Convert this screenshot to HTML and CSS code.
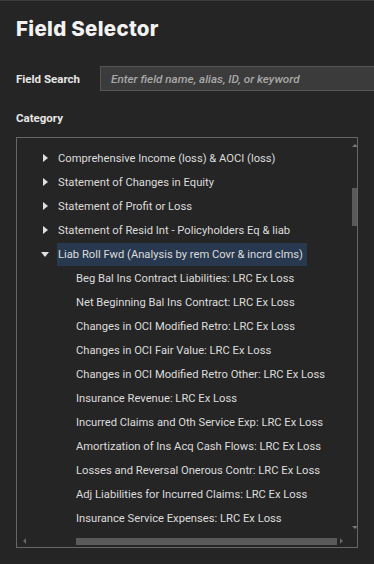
FILE: index.html
```html
<!DOCTYPE html>
<html lang="en">
<head>
    <meta charset="UTF-8">
    <meta name="viewport" content="width=device-width, initial-scale=1.0">
    <title>Field Selector</title>
    <link rel="stylesheet" href="styles.css">
</head>
<body>
<div class="panel">
    <h1 class="panel-title">Field Selector</h1>

    <!-- Buscador de campos -->
    <div class="search-row">
        <label class="field-label" for="fieldSearch">Field Search</label>
        <input type="text" id="fieldSearch" class="search-input" placeholder="Enter field name, alias, ID, or keyword">
    </div>

    <div class="field-label category-label">Category</div>

    <!-- Arbol de categorias -->
    <div class="tree">
        <div class="tree-viewport">
            <div class="tree-row"><span class="caret closed"></span><span class="node">Comprehensive Income (loss) &amp; AOCI (loss)</span></div>
            <div class="tree-row"><span class="caret closed"></span><span class="node">Statement of Changes in Equity</span></div>
            <div class="tree-row"><span class="caret closed"></span><span class="node">Statement of Profit or Loss</span></div>
            <div class="tree-row"><span class="caret closed"></span><span class="node">Statement of Resid Int - Policyholders Eq &amp; liab</span></div>
            <div class="tree-row"><span class="caret open"></span><span class="node selected">Liab Roll Fwd (Analysis by rem Covr &amp; incrd clms)</span></div>
            <div class="tree-row child"><span class="node">Beg Bal Ins Contract Liabilities: LRC Ex Loss</span></div>
            <div class="tree-row child"><span class="node">Net Beginning Bal Ins Contract: LRC Ex Loss</span></div>
            <div class="tree-row child"><span class="node">Changes in OCI Modified Retro: LRC Ex Loss</span></div>
            <div class="tree-row child"><span class="node">Changes in OCI Fair Value: LRC Ex Loss</span></div>
            <div class="tree-row child"><span class="node">Changes in OCI Modified Retro Other: LRC Ex Loss</span></div>
            <div class="tree-row child"><span class="node">Insurance Revenue: LRC Ex Loss</span></div>
            <div class="tree-row child"><span class="node">Incurred Claims and Oth Service Exp: LRC Ex Loss</span></div>
            <div class="tree-row child"><span class="node">Amortization of Ins Acq Cash Flows: LRC Ex Loss</span></div>
            <div class="tree-row child"><span class="node">Losses and Reversal Onerous Contr: LRC Ex Loss</span></div>
            <div class="tree-row child"><span class="node">Adj Liabilities for Incurred Claims: LRC Ex Loss</span></div>
            <div class="tree-row child"><span class="node">Insurance Service Expenses: LRC Ex Loss</span></div>
        </div>

        <!-- Barras de desplazamiento -->
        <div class="vscroll">
            <span class="arrow up"></span>
            <div class="vtrack"><div class="vthumb"></div></div>
            <span class="arrow down"></span>
        </div>
        <div class="hscroll">
            <span class="arrow left"></span>
            <div class="htrack"><div class="hthumb"></div></div>
            <span class="arrow right"></span>
        </div>
        <div class="corner"></div>
    </div>
</div>
</body>
</html>
```

FILE: styles.css
```css
html, body {
    margin: 0;
    padding: 0;
    background: #252525;
}

body {
    font-family: Roboto, "Liberation Sans", Arial, sans-serif;
    color: #dcdcdc;
    border-top: 1px solid #3a3a3a;
    overflow: hidden;
}

.panel {
    padding: 0 0 0 16px;
}

.panel-title {
    font-family: Inter, Roboto, sans-serif;
    font-size: 20.5px;
    font-weight: 800;
    color: #f2f2f2;
    margin: 0;
    padding-top: 14px;
    line-height: 28px;
    letter-spacing: 0.3px;
}

/* Buscador */
.search-row {
    display: flex;
    align-items: center;
    margin-top: 23px;
}

.field-label {
    font-size: 11.5px;
    font-weight: 700;
    color: #e6e6e6;
}

.search-row .field-label {
    width: 84px;
    flex: none;
}

.search-input {
    flex: none;
    width: 274px;
    height: 25px;
    box-sizing: border-box;
    background: #3b3b3b;
    border: 1px solid #555;
    border-right: none;
    color: #ddd;
    padding: 0 10px;
    font-family: Roboto, sans-serif;
    font-size: 11.7px;
    font-style: italic;
    font-weight: 500;
    outline: none;
}

.search-input::placeholder {
    color: #a8a8a8;
}

.category-label {
    margin-top: 20px;
    line-height: 14px;
}

/* Arbol */
.tree {
    margin-top: 12px;
    width: 342px;
    height: 411px;
    box-sizing: border-box;
    border: 1px solid #666;
    display: grid;
    grid-template-columns: 1fr 12px;
    grid-template-rows: 1fr 12px;
    overflow: hidden;
}

.tree-viewport {
    overflow: hidden;
    padding-top: 8px;
    padding-left: 24px;
}

.tree-row {
    display: flex;
    align-items: center;
    height: 24px;
    font-size: 11.2px;
    white-space: nowrap;
}

.tree-row.child {
    padding-left: 34px;
}

.caret {
    width: 16px;
    flex: none;
    position: relative;
    height: 10px;
}

.caret.closed::before {
    content: "";
    position: absolute;
    left: 2px;
    top: 1px;
    border-left: 5px solid #e0e0e0;
    border-top: 4px solid transparent;
    border-bottom: 4px solid transparent;
}

.caret.open::before {
    content: "";
    position: absolute;
    left: 0;
    top: 3px;
    border-top: 5px solid #e0e0e0;
    border-left: 4px solid transparent;
    border-right: 4px solid transparent;
}

.node {
    padding: 0 1px;
    line-height: 23px;
}

.node.selected {
    background: #28394f;
    padding-right: 4px;
}

/* Scrollbars */
.vscroll {
    display: flex;
    flex-direction: column;
    align-items: center;
    padding: 3px 0;
}

.vtrack {
    flex: 1;
    width: 100%;
    display: flex;
    justify-content: center;
}

.vthumb {
    width: 7px;
    height: 38px;
    margin-top: 38px;
    background: #5a5a5a;
}

.hscroll {
    display: flex;
    align-items: center;
    padding: 0 3px;
}

.htrack {
    flex: 1;
    height: 100%;
    display: flex;
    align-items: center;
}

.hthumb {
    height: 7px;
    width: 261px;
    margin-left: 47px;
    background: #5a5a5a;
}

.arrow {
    width: 0;
    height: 0;
    flex: none;
    margin: 3px;
}

.arrow.up {
    border-bottom: 3px solid #777;
    border-left: 3px solid transparent;
    border-right: 3px solid transparent;
}

.arrow.down {
    border-top: 3px solid #777;
    border-left: 3px solid transparent;
    border-right: 3px solid transparent;
}

.arrow.left {
    border-right: 3px solid #666;
    border-top: 3px solid transparent;
    border-bottom: 3px solid transparent;
}

.arrow.right {
    border-left: 3px solid #666;
    border-top: 3px solid transparent;
    border-bottom: 3px solid transparent;
}
```
